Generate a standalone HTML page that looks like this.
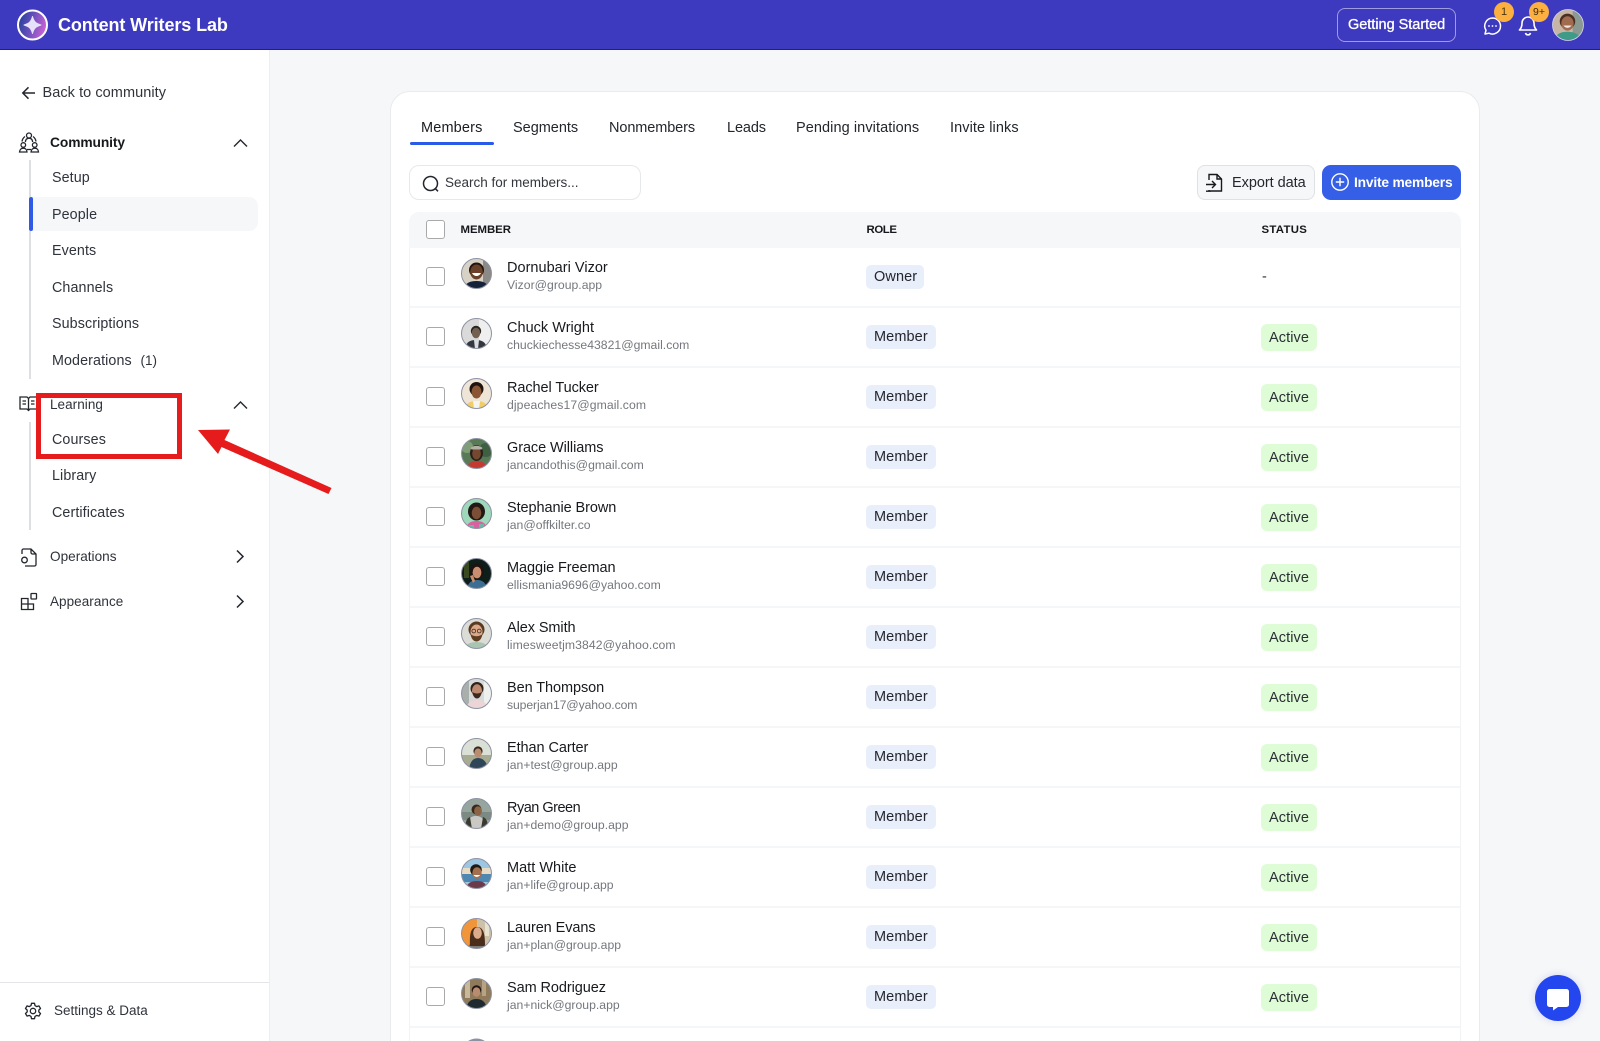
<!DOCTYPE html>
<html lang="en"><head><meta charset="utf-8"><title>Content Writers Lab – Members</title>
<style>
*{box-sizing:border-box;margin:0;padding:0}
html,body{width:1600px;height:1041px;overflow:hidden;background:#f6f7f9;font-family:"Liberation Sans",sans-serif;color:#23262d}
#p{position:relative;width:1600px;height:1041px;overflow:hidden;background:#f6f7f9}
.a,.t,.row,svg.i{position:absolute}
.t{white-space:nowrap;line-height:20px;font-size:14.5px;letter-spacing:.1px}
.top{left:0;top:0;width:1600px;height:50px;background:#3e3abf;border-bottom:1px solid #1f1a9e}
.side{left:0;top:50px;width:270px;height:991px;background:#fff;border-right:1px solid #eceef1}
.card{left:390px;top:91px;width:1090px;height:1000px;background:#fff;border:1px solid #e9ebef;border-radius:20px}
.row{left:409px;width:1052px;height:60px;border-bottom:2px solid #f5f6f7;border-left:1px solid #f2f3f5;border-right:1px solid #f2f3f5}
.cb{position:absolute;left:16px;top:19px;width:19px;height:19px;border:1.5px solid #a9a9a9;border-radius:3px;background:#fff}
.av{position:absolute;left:50.500px;top:10px;width:31px;height:31px}
.n{position:absolute;left:97px;top:10px;font-size:14.5px;line-height:20px;color:#17191d;letter-spacing:-.08px;white-space:nowrap}
.e{position:absolute;left:97px;top:28px;font-size:12.2px;line-height:18px;color:#74777d;letter-spacing:.02px;white-space:nowrap}
.r{position:absolute;left:456px;top:17px;height:24px;width:70px;background:#e9eefb;border-radius:5px;font-size:14.5px;line-height:25px;padding-left:8px;color:#23262d;letter-spacing:.1px}
.s{position:absolute;left:851px;top:16px;height:27px;width:56px;background:#defdd6;border-radius:6px;font-size:14.5px;line-height:29px;padding-left:8px;color:#2b2f35;letter-spacing:.08px}
.th{font-size:11.4px;font-weight:bold;color:#15171a}
.nav{color:#2f333b;font-size:14.3px;letter-spacing:.1px}
</style></head><body><div id="p">
<svg width="0" height="0" style="position:absolute"><defs><clipPath id="c"><circle cx="15.500" cy="15.500" r="15"/></clipPath>
<linearGradient id="lg" x1="0" x2="1" y1=".2" y2=".5"><stop offset="0" stop-color="#1f3f98"/><stop offset=".5" stop-color="#6a50bd"/><stop offset="1" stop-color="#cc62d4"/></linearGradient></defs></svg>

<div class="a top"></div>
<svg class="i" style="left:16px;top:9px" width="33" height="33" viewBox="0 0 33 33"><circle cx="16.500" cy="16" r="14.500" fill="url(#lg)" stroke="#fff" stroke-width="2"/><path d="M16.500 7.500C18 13 20 14.500 25 16c-5 1.500-7 3-8.500 8.500C15 19 13 17.500 8 16c5-1.500 7-3 8.500-8.500z" fill="#e6e0fb" stroke="#e6e0fb" stroke-width="1" stroke-linejoin="round"/></svg>
<div class="t" style="left:58px;top:15px;font-size:18px;font-weight:bold;color:#fff;letter-spacing:-.1px">Content Writers Lab</div>
<div class="a" style="left:1337px;top:8px;width:119px;height:34px;border:1.5px solid #9f9ce0;border-radius:8px"></div>
<div class="t" style="left:1348px;top:15px;color:#fff;font-size:14.5px;letter-spacing:-.02px;-webkit-text-stroke:.3px #fff">Getting Started</div>
<svg class="i" style="left:1482px;top:15px" width="22" height="22" viewBox="0 0 22 22" fill="none" stroke="#fff" stroke-width="1.500"><path d="M10.500 3a8 8 0 0 1 8 8 8 8 0 0 1-11.500 7.200L3 19l1-3.700A8 8 0 0 1 10.500 3z" stroke-linejoin="round"/><circle cx="7" cy="11" r=".9" fill="#fff" stroke="none"/><circle cx="10.500" cy="11" r=".9" fill="#fff" stroke="none"/><circle cx="14" cy="11" r=".9" fill="#fff" stroke="none"/></svg>
<div class="a" style="left:1494px;top:2px;width:20px;height:20px;border-radius:50%;background:#fbb040;color:#4a3510;font-size:11px;line-height:20px;text-align:center">1</div>
<svg class="i" style="left:1517px;top:14px" width="22" height="22" viewBox="0 0 22 22" fill="none" stroke="#fff" stroke-width="1.600"><path d="M11 3a6 6 0 0 0-6 6c0 4-1.500 6-2.500 7h17C18.500 15 17 13 17 9a6 6 0 0 0-6-6z" stroke-linejoin="round"/><path d="M8.500 19a2.600 2.600 0 0 0 5 0"/></svg>
<div class="a" style="left:1529px;top:2px;width:20px;height:20px;border-radius:50%;background:#fbb040;color:#3a2a10;font-size:10.500px;line-height:20px;text-align:center">9+</div>
<svg class="i" style="left:1552px;top:9px" width="32" height="32" viewBox="0 0 31 31"><g clip-path="url(#c)"><rect width="31" height="31" fill="#c7b5a5"/><rect x="20" width="11" height="31" fill="#8a9a92"/><path d="M2 31c1-7 7-9 13-9s12 2 14 9z" fill="#3f9a88"/><circle cx="15" cy="12" r="7.500" fill="#4a2e22"/><ellipse cx="15" cy="14" rx="6" ry="7" fill="#a06b4e"/><path d="M11 16c2 3 6 3 8 0z" fill="#f2e8e0"/></g><circle cx="15.500" cy="15.500" r="15" fill="none" stroke="#d6d4ea" stroke-width=".8"/></svg>

<div class="a side"></div>
<svg class="i" style="left:21px;top:85px" width="16" height="16" viewBox="0 0 16 16" fill="none" stroke="#23262d" stroke-width="1.500"><path d="M14 8H2M7.500 2.300 1.800 8l5.700 5.700"/></svg>
<div class="t nav" style="left:42.500px;top:83px;font-size:14.500px;letter-spacing:.06px">Back to community</div>
<svg class="i" style="left:18px;top:131px" width="22" height="23" viewBox="0 0 22 23" fill="none" stroke="#23262d" stroke-width="1.300"><circle cx="11" cy="4.500" r="2.500"/><path d="M7.300 11c.3-2.500 1.800-3.800 3.700-3.800s3.400 1.300 3.700 3.800M7 5.500a7.500 7.500 0 0 0-3 5M15 5.500a7.500 7.500 0 0 1 3 5M9 18.500h4"/><circle cx="5.300" cy="14" r="2.300"/><circle cx="16.700" cy="14" r="2.300"/><path d="M1.500 21c.2-2.500 1.800-3.800 3.800-3.800S8.900 18.500 9 21zM13 21c.2-2.500 1.800-3.800 3.800-3.800s3.600 1.300 3.700 3.800z"/></svg>
<div class="t" style="left:50px;top:133px;font-weight:bold;font-size:13.800px;color:#17191d;letter-spacing:-.1px">Community</div>
<svg class="i" style="left:233px;top:137px" width="15" height="12" viewBox="0 0 15 12" fill="none" stroke="#23262d" stroke-width="1.400"><path d="M1 9.500 7.500 3 14 9.500"/></svg>
<div class="a" style="left:29px;top:160px;width:2px;height:219px;background:#dedfe2"></div>
<div class="t nav" style="left:52px;top:168px">Setup</div>
<div class="a" style="left:29px;top:197px;width:229px;height:34px;background:#f6f7f9;border-radius:0 9px 9px 0"></div>
<div class="a" style="left:29px;top:197px;width:4px;height:34px;background:#2f5ae6;border-radius:2px"></div>
<div class="t nav" style="left:52px;top:204.500px">People</div>
<div class="t nav" style="left:52px;top:241px">Events</div>
<div class="t nav" style="left:52px;top:277.500px">Channels</div>
<div class="t nav" style="left:52px;top:314px">Subscriptions</div>
<div class="t nav" style="left:52px;top:350.500px">Moderations</div>
<div class="t nav" style="left:140.500px;top:350.500px;font-size:13.500px;letter-spacing:0">(1)</div>
<svg class="i" style="left:19px;top:395px" width="19" height="18" viewBox="0 0 19 18" fill="none" stroke="#23262d" stroke-width="1.300"><path d="M1 2h7l1.500 1.500L11 2h7v12h-7l-1.500 1.500L8 14H1zM9.500 3.500v12M3.500 6H7M3.500 9H7M12 6h3.500M12 9h3.500"/></svg>
<div class="t nav" style="left:50px;top:395px;font-size:13.500px;letter-spacing:.05px">Learning</div>
<svg class="i" style="left:233px;top:399px" width="15" height="12" viewBox="0 0 15 12" fill="none" stroke="#23262d" stroke-width="1.400"><path d="M1 9.500 7.500 3 14 9.500"/></svg>
<div class="a" style="left:29px;top:422px;width:2px;height:108px;background:#dedfe2"></div>
<div class="t nav" style="left:52px;top:429.500px">Courses</div>
<div class="t nav" style="left:52px;top:466px">Library</div>
<div class="t nav" style="left:52px;top:502.500px">Certificates</div>
<svg class="i" style="left:20px;top:547px" width="18" height="20" viewBox="0 0 18 20" fill="none" stroke="#23262d" stroke-width="1.300"><path d="M2 7V3.500A1.500 1.500 0 0 1 3.500 2H11l5 5v10.500a1.500 1.500 0 0 1-1.500 1.500H5M11 2v3.500A1.500 1.500 0 0 0 12.500 7H16"/><circle cx="4.500" cy="13" r="2.800"/></svg>
<div class="t nav" style="left:50px;top:547px;font-size:13.600px;letter-spacing:0">Operations</div>
<svg class="i" style="left:234px;top:549px" width="12" height="15" viewBox="0 0 12 15" fill="none" stroke="#23262d" stroke-width="1.500"><path d="M3 1.500 9 7.500 3 13.500"/></svg>
<svg class="i" style="left:20px;top:592px" width="18" height="19" viewBox="0 0 18 19" fill="none" stroke="#23262d" stroke-width="1.300"><path d="M1.500 6.500h6.500v11H1.500zM1.500 12h12v5.500H8"/><rect x="11" y="1.500" width="5.500" height="5.500" rx=".5"/></svg>
<div class="t nav" style="left:50px;top:592px;font-size:13.500px;letter-spacing:.05px">Appearance</div>
<svg class="i" style="left:234px;top:594px" width="12" height="15" viewBox="0 0 12 15" fill="none" stroke="#23262d" stroke-width="1.500"><path d="M3 1.500 9 7.500 3 13.500"/></svg>
<div class="a" style="left:0;top:982px;width:269px;height:1px;background:#e4e5e8"></div>
<svg class="i" style="left:24px;top:1002px" width="18" height="18" viewBox="0 0 18 18" fill="none" stroke="#23262d" stroke-width="1.300"><circle cx="9" cy="9" r="2.700"/><path d="M7.500 1.300h3l.5 2.300 1.700 1 2.300-.7 1.500 2.600-1.700 1.600v1.800l1.700 1.600-1.500 2.600-2.300-.7-1.700 1-.5 2.300h-3L7 14.400l-1.700-1-2.300.7-1.500-2.600 1.700-1.600V8.100L1.500 6.500 3 3.900l2.300.7 1.700-1z" stroke-linejoin="round"/></svg>
<div class="t nav" style="left:54px;top:1001px;font-size:13.500px;letter-spacing:0">Settings &amp; Data</div>

<!-- annotation -->
<div class="a" style="left:36px;top:393px;width:146px;height:65.500px;border:5.500px solid #e51b1c"></div>
<svg class="i" style="left:190px;top:420px" width="150" height="80" viewBox="190 420 150 80"><path d="M198 430 230 429.500 224.500 440 331.500 488 328.500 494 221.500 447 218 454z" fill="#e51b1c"/></svg>

<!-- card -->
<div class="a card"></div>
<div class="t" style="left:421px;top:117.500px;color:#1a1c20;letter-spacing:.15px">Members</div>
<div class="a" style="left:409.500px;top:141.500px;width:84px;height:3.500px;background:#2a5ae8;border-radius:2px"></div>
<div class="t" style="left:513px;top:117.500px;letter-spacing:-.02px">Segments</div>
<div class="t" style="left:609px;top:117.500px;letter-spacing:-.1px">Nonmembers</div>
<div class="t" style="left:727px;top:117.500px;letter-spacing:-.12px">Leads</div>
<div class="t" style="left:796px;top:117.500px;letter-spacing:.08px">Pending invitations</div>
<div class="t" style="left:950px;top:117.500px;letter-spacing:.08px">Invite links</div>

<div class="a" style="left:409px;top:165px;width:232px;height:35px;border:1px solid #e6e8ec;border-radius:10px;background:#fff"></div>
<svg class="i" style="left:421px;top:174px" width="19" height="19" viewBox="0 0 19 19" fill="none" stroke="#23262d" stroke-width="1.500"><circle cx="9.500" cy="9.500" r="7"/><path d="M14.500 14.800 17 17.300"/></svg>
<div class="t" style="left:445px;top:173px;font-size:13.500px;letter-spacing:0;color:#33363c">Search for members...</div>

<div class="a" style="left:1197px;top:165px;width:118px;height:35px;background:#f6f7f9;border:1px solid #dfe1e5;border-radius:8px"></div>
<svg class="i" style="left:1205px;top:173px" width="19" height="20" viewBox="0 0 19 20" fill="none" stroke="#17191d" stroke-width="1.400"><path d="M4 7V1.500h8l4.500 4.500v12H4v-1M12 1.500V6h4.500M1 11.500h9M7 8l3.500 3.500L7 15M1 18.200h5"/></svg>
<div class="t" style="left:1232px;top:173px;letter-spacing:-.05px">Export data</div>
<div class="a" style="left:1322px;top:165px;width:139px;height:35px;background:#345fe6;border-radius:9px"></div>
<svg class="i" style="left:1330px;top:172px" width="20" height="20" viewBox="0 0 20 20" fill="none" stroke="#fff" stroke-width="1.400"><circle cx="10" cy="10" r="8.200"/><path d="M10 5.800v8.400M5.800 10h8.400"/></svg>
<div class="t" style="left:1354px;top:173px;font-weight:bold;font-size:13.800px;color:#fff;letter-spacing:-.2px">Invite members</div>

<div class="a" style="left:409px;top:212px;width:1052px;height:36px;background:#f6f7f9;border-radius:10px 10px 0 0"></div>
<div class="a" style="left:426px;top:220px;width:19px;height:19px;border:1.500px solid #a9a9a9;border-radius:3px;background:#fff"></div>
<div class="t th" style="left:460.500px;top:219.500px;letter-spacing:-.03px">MEMBER</div>
<div class="t th" style="left:866.500px;top:219.500px;letter-spacing:-.4px">ROLE</div>
<div class="t th" style="left:1261.500px;top:219.500px;letter-spacing:.3px">STATUS</div>

<div class="row" style="top:248px"><div class="cb"></div>
<svg class="av" viewBox="0 0 31 31"><g clip-path="url(#c)"><rect width="31" height="31" fill="#d8d2c6"/><rect x="22" width="9" height="31" fill="#8c8a86"/><path d="M3 31c1-6 6-8 12.500-8S27 25 28 31z" fill="#15233a"/><circle cx="15.500" cy="12" r="7.500" fill="#1f1510"/><ellipse cx="15.500" cy="14" rx="6.300" ry="7.500" fill="#6a4028"/><path d="M11 15c2 4 7 4 9 0z" fill="#fff"/></g><circle cx="15.500" cy="15.500" r="15" fill="none" stroke="#8d92a3"/></svg>
<div class="n" style="letter-spacing:.02px">Dornubari Vizor</div><div class="e">Vizor@group.app</div><div class="r" style="width:58px;line-height:24px">Owner</div><div class="t" style="left:852px;top:19px;color:#333">-</div></div>

<div class="row" style="top:308px"><div class="cb"></div>
<svg class="av" viewBox="0 0 31 31"><g clip-path="url(#c)"><rect width="31" height="31" fill="#dadada"/><rect x="18" width="13" height="31" fill="#efefef"/><path d="M4 31c1-7 5-9 11-9s10 2 11 9z" fill="#34383e"/><path d="M13 22h5l-1 9h-3z" fill="#d9dde2"/><circle cx="15" cy="13" r="5.200" fill="#2a2624"/><ellipse cx="15" cy="15" rx="4.200" ry="5.300" fill="#74604f"/></g><circle cx="15.500" cy="15.500" r="15" fill="none" stroke="#8d92a3"/></svg>
<div class="n" style="letter-spacing:.02px">Chuck Wright</div><div class="e">chuckiechesse43821@gmail.com</div><div class="r">Member</div><div class="s">Active</div></div>

<div class="row" style="top:368px"><div class="cb"></div>
<svg class="av" viewBox="0 0 31 31"><g clip-path="url(#c)"><rect width="31" height="31" fill="#efe5d6"/><path d="M4 31c1-6 5-8 11.500-8S26 25 27 31z" fill="#f1cd66"/><path d="M12 23h7l-1 8h-5z" fill="#f6f4ee"/><circle cx="15.500" cy="11" r="7" fill="#1d1410"/><ellipse cx="15.500" cy="14" rx="5" ry="6.500" fill="#8a5534"/></g><circle cx="15.500" cy="15.500" r="15" fill="none" stroke="#8d92a3"/></svg>
<div class="n">Rachel Tucker</div><div class="e" style="letter-spacing:.1px">djpeaches17@gmail.com</div><div class="r">Member</div><div class="s">Active</div></div>

<div class="row" style="top:428px"><div class="cb"></div>
<svg class="av" viewBox="0 0 31 31"><g clip-path="url(#c)"><rect width="31" height="31" fill="#587a56"/><circle cx="6" cy="9" r="6" fill="#7f9e78"/><circle cx="25" cy="12" r="7" fill="#3f5f42"/><path d="M6 31c1-6 4-8 9.500-8S25 25 26 31z" fill="#c43a33"/><ellipse cx="15.500" cy="15" rx="6.500" ry="8" fill="#2a1f1a"/><ellipse cx="15.500" cy="15.500" rx="4.300" ry="6" fill="#74492f"/><path d="M9.500 10c3-3 9-3 12 0l-1 1.500h-10z" fill="#b4b0a4"/></g><circle cx="15.500" cy="15.500" r="15" fill="none" stroke="#8d92a3"/></svg>
<div class="n">Grace Williams</div><div class="e">jancandothis@gmail.com</div><div class="r">Member</div><div class="s">Active</div></div>

<div class="row" style="top:488px"><div class="cb"></div>
<svg class="av" viewBox="0 0 31 31"><g clip-path="url(#c)"><rect width="31" height="31" fill="#9ed7b9"/><path d="M5 31c1-6 5-8 10.500-8S25 25 26 31z" fill="#d861a0"/><path d="M8 27h5v4H8zM18 26h5v5h-5z" fill="#6eb7a8"/><ellipse cx="15.500" cy="13.500" rx="8.500" ry="9" fill="#231815"/><ellipse cx="15.500" cy="15" rx="4.800" ry="6.200" fill="#7b4f36"/></g><circle cx="15.500" cy="15.500" r="15" fill="none" stroke="#8d92a3"/></svg>
<div class="n">Stephanie Brown</div><div class="e">jan@offkilter.co</div><div class="r">Member</div><div class="s">Active</div></div>

<div class="row" style="top:548px"><div class="cb"></div>
<svg class="av" viewBox="0 0 31 31"><g clip-path="url(#c)"><rect width="31" height="31" fill="#0e1e1a"/><rect x="3" y="4" width="5" height="16" fill="#3a4a20"/><path d="M6 31c1-6 4-9 10-9s9 3 10 9z" fill="#3c6d92"/><ellipse cx="16" cy="13" rx="7" ry="8" fill="#1e130f"/><ellipse cx="16" cy="14.500" rx="4.400" ry="5.800" fill="#c98e70"/><path d="M9 18l3 7 2-2-2-6z" fill="#c98e70"/></g><circle cx="15.500" cy="15.500" r="15" fill="none" stroke="#8d92a3"/></svg>
<div class="n">Maggie Freeman</div><div class="e">ellismania9696@yahoo.com</div><div class="r">Member</div><div class="s">Active</div></div>

<div class="row" style="top:608px"><div class="cb"></div>
<svg class="av" viewBox="0 0 31 31"><g clip-path="url(#c)"><rect width="31" height="31" fill="#dcdcd7"/><path d="M4 31c1-5 5-7 11.500-7S26 26 27 31z" fill="#a9c5b2"/><circle cx="15.500" cy="11.500" r="8" fill="#59391f"/><ellipse cx="15.500" cy="14" rx="6" ry="7.500" fill="#dba98a"/><path d="M9.500 16c1 6 4 7.500 6 7.500s5-1.500 6-7.500c-3 3-9 3-12 0z" fill="#5e3d22"/><circle cx="12.800" cy="13" r="1.900" fill="none" stroke="#2c1e14" stroke-width=".7"/><circle cx="18.200" cy="13" r="1.900" fill="none" stroke="#2c1e14" stroke-width=".7"/></g><circle cx="15.500" cy="15.500" r="15" fill="none" stroke="#8d92a3"/></svg>
<div class="n">Alex Smith</div><div class="e" style="letter-spacing:.1px">limesweetjm3842@yahoo.com</div><div class="r">Member</div><div class="s">Active</div></div>

<div class="row" style="top:668px"><div class="cb"></div>
<svg class="av" viewBox="0 0 31 31"><g clip-path="url(#c)"><rect width="31" height="31" fill="#d7dad8"/><rect width="8" height="31" fill="#a9b0ac"/><rect x="23" width="8" height="31" fill="#eef0ee"/><path d="M5 31c1-6 5-9 11-9s10 3 11 9z" fill="#ecd5d6"/><circle cx="16" cy="10.500" r="6.500" fill="#2f231b"/><ellipse cx="16" cy="13" rx="5" ry="6.800" fill="#bd8a6f"/><path d="M11.200 14c1 5 3 6.500 4.800 6.500s3.800-1.500 4.800-6.500c-3 2-6.600 2-9.600 0z" fill="#3a2a20"/></g><circle cx="15.500" cy="15.500" r="15" fill="none" stroke="#8d92a3"/></svg>
<div class="n">Ben Thompson</div><div class="e" style="letter-spacing:-.1px">superjan17@yahoo.com</div><div class="r">Member</div><div class="s">Active</div></div>

<div class="row" style="top:728px"><div class="cb"></div>
<svg class="av" viewBox="0 0 31 31"><g clip-path="url(#c)"><rect width="31" height="31" fill="#dbe0d6"/><rect y="17" width="31" height="14" fill="#a6ab92"/><path d="M8 31c1-7 4-11 9-11s9 4 10 11z" fill="#2e4657"/><circle cx="17" cy="13" r="4.600" fill="#33291f"/><ellipse cx="17" cy="15" rx="3.700" ry="4.600" fill="#ba8c70"/></g><circle cx="15.500" cy="15.500" r="15" fill="none" stroke="#8d92a3"/></svg>
<div class="n">Ethan Carter</div><div class="e">jan+test@group.app</div><div class="r">Member</div><div class="s">Active</div></div>

<div class="row" style="top:788px"><div class="cb"></div>
<svg class="av" viewBox="0 0 31 31"><g clip-path="url(#c)"><rect width="31" height="31" fill="#97a59f"/><rect y="14" width="31" height="8" fill="#7c8a84"/><path d="M5 31c.5-9 4-13 10-13s9 4 10 13z" fill="#c9c8c4"/><path d="M4 31c.5-8 2-11 5-12l2 12zM27 31c0-8-2-11-5-12l-2 12z" fill="#3b3a30"/><circle cx="15.500" cy="11.500" r="5" fill="#3a261a"/><ellipse cx="17" cy="13" rx="3.900" ry="4.800" fill="#8b6346"/></g><circle cx="15.500" cy="15.500" r="15" fill="none" stroke="#8d92a3"/></svg>
<div class="n" style="letter-spacing:-.5px">Ryan Green</div><div class="e">jan+demo@group.app</div><div class="r">Member</div><div class="s">Active</div></div>

<div class="row" style="top:848px"><div class="cb"></div>
<svg class="av" viewBox="0 0 31 31"><g clip-path="url(#c)"><rect width="31" height="31" fill="#9cc6e2"/><rect y="10" width="31" height="6" fill="#e9dac2"/><rect y="16" width="31" height="8" fill="#4e88b2"/><path d="M5 31c1-6 5-8 11-8s9 2 10 8z" fill="#6b3b4c"/><circle cx="15" cy="12" r="5.800" fill="#1f1712"/><ellipse cx="16" cy="15" rx="4.700" ry="5.800" fill="#a2704f"/><path d="M12.500 17c1.500 2.500 5 2.500 6.500 0z" fill="#fff"/></g><circle cx="15.500" cy="15.500" r="15" fill="none" stroke="#8d92a3"/></svg>
<div class="n" style="letter-spacing:.02px">Matt White</div><div class="e">jan+life@group.app</div><div class="r">Member</div><div class="s">Active</div></div>

<div class="row" style="top:908px"><div class="cb"></div>
<svg class="av" viewBox="0 0 31 31"><g clip-path="url(#c)"><rect width="31" height="31" fill="#f0953a"/><rect x="16" width="15" height="31" fill="#cdc2a9"/><rect x="24" y="2" width="4" height="16" fill="#e9e2d0"/><path d="M6 31c1-5 5-7 10-7s8 2 9 7z" fill="#7a7a78"/><path d="M9 28c-.5-10 0-19 7-19s8 8 8 19z" fill="#4b2d1b"/><ellipse cx="16.500" cy="15" rx="4.300" ry="5.800" fill="#dcab8a"/></g><circle cx="15.500" cy="15.500" r="15" fill="none" stroke="#8d92a3"/></svg>
<div class="n">Lauren Evans</div><div class="e">jan+plan@group.app</div><div class="r">Member</div><div class="s">Active</div></div>

<div class="row" style="top:968px"><div class="cb"></div>
<svg class="av" viewBox="0 0 31 31"><g clip-path="url(#c)"><rect width="31" height="31" fill="#8f7a5c"/><rect x="4" width="5" height="20" fill="#c8b89c"/><rect x="21" width="4" height="18" fill="#b5a384"/><path d="M5 31c1-7 5-10 10.500-10S25 24 26 31z" fill="#1e2a30"/><circle cx="15.500" cy="12" r="4.800" fill="#1f1713"/><ellipse cx="15.500" cy="14" rx="3.900" ry="4.800" fill="#b98b6f"/></g><circle cx="15.500" cy="15.500" r="15" fill="none" stroke="#8d92a3"/></svg>
<div class="n">Sam Rodriguez</div><div class="e">jan+nick@group.app</div><div class="r">Member</div><div class="s">Active</div></div>

<div class="row" style="top:1028px;border-bottom:0"><div class="cb"></div>
<svg class="av" viewBox="0 0 31 31"><circle cx="15.500" cy="15.500" r="15" fill="#8d92a3"/></svg></div>

<div class="a" style="left:1535px;top:975px;width:46px;height:46px;border-radius:50%;background:#2346ef;box-shadow:0 0 8px rgba(40,60,200,.18)"></div>
<svg class="i" style="left:1546px;top:988px" width="24" height="24" viewBox="0 0 24 24"><path d="M3.500 1h17A2.500 2.500 0 0 1 23 3.500v13a2.500 2.500 0 0 1-2.500 2.500H12l-5 3.500V19H3.500A2.500 2.500 0 0 1 1 16.500v-13A2.500 2.500 0 0 1 3.500 1z" fill="#fff"/></svg>
</div></body></html>
